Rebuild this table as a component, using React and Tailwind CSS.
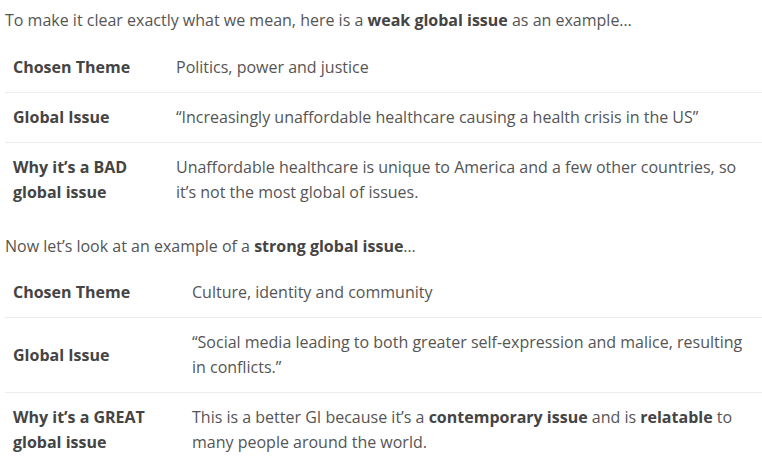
const weakRows = [
  { label: 'Chosen Theme', value: 'Politics, power and justice' },
  { label: 'Global Issue', value: '“Increasingly unaffordable healthcare causing a health crisis in the US”' },
  {
    label: <>Why it’s a BAD<br />global issue</>,
    value: 'Unaffordable healthcare is unique to America and a few other countries, so it’s not the most global of issues.',
  },
]

const strongRows = [
  { label: 'Chosen Theme', value: 'Culture, identity and community' },
  { label: 'Global Issue', value: '“Social media leading to both greater self-expression and malice, resulting in conflicts.”' },
  {
    label: <>Why it’s a GREAT<br />global issue</>,
    value: (
      <>
        This is a better GI because it’s a <b className="font-bold text-[#444]">contemporary issue</b> and is{' '}
        <b className="font-bold text-[#444]">relatable</b> to many people around the world.
      </>
    ),
  },
]

function IssueTable({ rows, labelWidth }) {
  return (
    <div className="mb-[17px]">
      {rows.map((row, i) => (
        <div key={i} className={`flex items-center ${i > 0 ? 'border-t border-[#ececec]' : ''}`}>
          <div className={`${labelWidth} shrink-0 px-2 py-3 font-bold text-[#444]`}>{row.label}</div>
          <div className="flex-1 px-2 py-3">{row.value}</div>
        </div>
      ))}
    </div>
  )
}

export default function App() {
  return (
    <div
      className="w-[762px] h-[468px] overflow-hidden bg-white pl-[5px] pt-[8px] text-[16px] leading-[25px] text-[#555]"
      style={{ fontFamily: '"Open Sans", "Liberation Sans", sans-serif' }}
    >
      <p className="mb-[10px]">
        To make it clear exactly what we mean, here is a <b className="font-bold text-[#444]">weak global issue</b> as an example…
      </p>
      <IssueTable rows={weakRows} labelWidth="w-[163px]" />

      <p className="mb-[9px]">
        Now let’s look at an example of a <b className="font-bold text-[#444]">strong global issue</b>…
      </p>
      <IssueTable rows={strongRows} labelWidth="w-[179px]" />
    </div>
  )
}
